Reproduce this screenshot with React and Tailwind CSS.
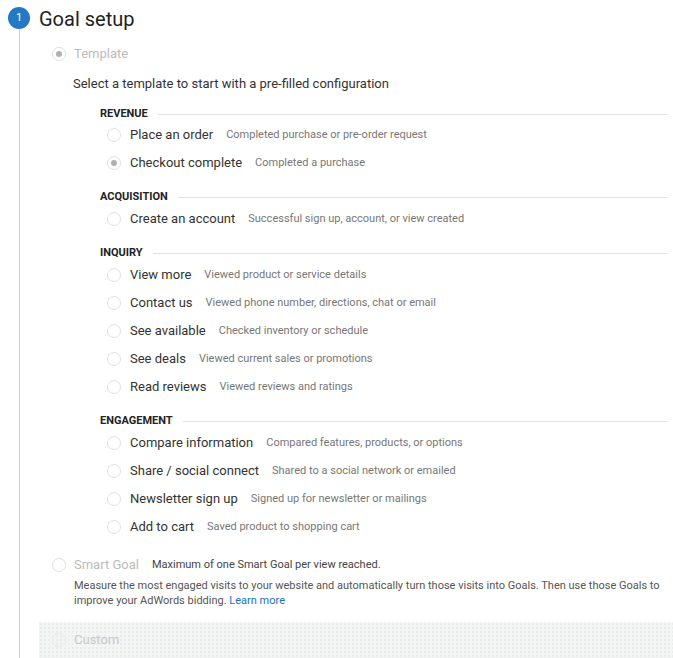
import React from 'react'

const sections = [
  {
    name: 'Revenue',
    items: [
      { label: 'Place an order', desc: 'Completed purchase or pre-order request' },
      { label: 'Checkout complete', desc: 'Completed a purchase', checked: true },
    ],
  },
  {
    name: 'Acquisition',
    items: [{ label: 'Create an account', desc: 'Successful sign up, account, or view created' }],
  },
  {
    name: 'Inquiry',
    items: [
      { label: 'View more', desc: 'Viewed product or service details' },
      { label: 'Contact us', desc: 'Viewed phone number, directions, chat or email' },
      { label: 'See available', desc: 'Checked inventory or schedule' },
      { label: 'See deals', desc: 'Viewed current sales or promotions' },
      { label: 'Read reviews', desc: 'Viewed reviews and ratings' },
    ],
  },
  {
    name: 'Engagement',
    items: [
      { label: 'Compare information', desc: 'Compared features, products, or options' },
      { label: 'Share / social connect', desc: 'Shared to a social network or emailed' },
      { label: 'Newsletter sign up', desc: 'Signed up for newsletter or mailings' },
      { label: 'Add to cart', desc: 'Saved product to shopping cart' },
    ],
  },
]

const Radio = ({ checked, faint }) => (
  <span
    className={`flex items-center justify-center w-[14px] h-[14px] rounded-full border shrink-0 ${
      faint ? 'border-[#ebebeb] bg-transparent' : 'border-[#e0e0e0] bg-white'
    }`}
  >
    {checked && <span className="w-[6px] h-[6px] rounded-full bg-[#b0b0b0]" />}
  </span>
)

const App = () => {
  return (
    <div className="w-[673px] h-[658px] overflow-hidden bg-white flex font-['Roboto',sans-serif] text-[#333]">
      {/* stepper rail */}
      <div className="w-[39px] flex flex-col items-center shrink-0 pt-[7px] pr-px">
        <div className="w-[22px] h-[22px] rounded-full bg-[#2379c4] text-white text-[11px] flex items-center justify-center">
          1
        </div>
        <div className="flex-1 w-px bg-[#cfcfcf]" />
      </div>

      <div className="flex-1 flex flex-col">
        <div className="h-[38px] flex items-center text-[20px] text-[#222]">Goal setup</div>

        <div className="h-[30px] pt-[2px] flex items-center gap-[8px] pl-[13px]">
          <Radio checked />
          <span className="text-[13px] text-[#bbb]">Template</span>
        </div>

        <div className="h-[32px] flex items-center pl-[34px] text-[13px] text-[#333]">
          Select a template to start with a pre-filled configuration
        </div>

        <div className="pl-[61px] w-[628px] mt-[6px] flex flex-col">
          {sections.map((s, i) => (
            <div key={s.name} className={i > 0 ? 'mt-[14px]' : ''}>
              <div className={`h-[14px] flex items-center gap-[10px] ${i === 0 ? 'pt-[2px]' : ''}`}>
                <span className="text-[11px] font-bold uppercase text-[#222]">{s.name}</span>
                <span className="flex-1 h-px bg-[#e0e0e0]" />
              </div>
              {s.items.map((it) => (
                <div key={it.label} className="h-[28px] pt-[2px] flex items-center pl-[7px]">
                  <Radio checked={it.checked} />
                  <span className="ml-[9px] text-[13px] text-[#333]">{it.label}</span>
                  <span className="ml-[13px] text-[11px] text-[#777]">{it.desc}</span>
                </div>
              ))}
            </div>
          ))}
        </div>

        <div className="mt-[10px] h-[28px] pt-[2px] flex items-center pl-[13px]">
          <Radio />
          <span className="ml-[8px] text-[13px] text-[#bbb]">Smart Goal</span>
          <span className="ml-[13px] text-[11px] text-[#444]">Maximum of one Smart Goal per view reached.</span>
        </div>
        <p className="pl-[35px] w-[630px] text-[11px] leading-[15px] text-[#555]">
          Measure the most engaged visits to your website and automatically turn those visits into Goals. Then use
          those Goals to improve your AdWords bidding. <a className="text-[#1a6fc4]">Learn more</a>
        </p>

        <div className="mt-[14px] flex-1 bg-[#f3f4f4] bg-[radial-gradient(#ebeded_1px,transparent_1px)] bg-[length:4px_4px]">
          <div className="h-[34px] pt-[2px] flex items-center pl-[13px]">
            <Radio faint />
            <span className="ml-[8px] text-[13px] text-[#c8c8c8]">Custom</span>
          </div>
        </div>
      </div>
    </div>
  )
}

export default App
